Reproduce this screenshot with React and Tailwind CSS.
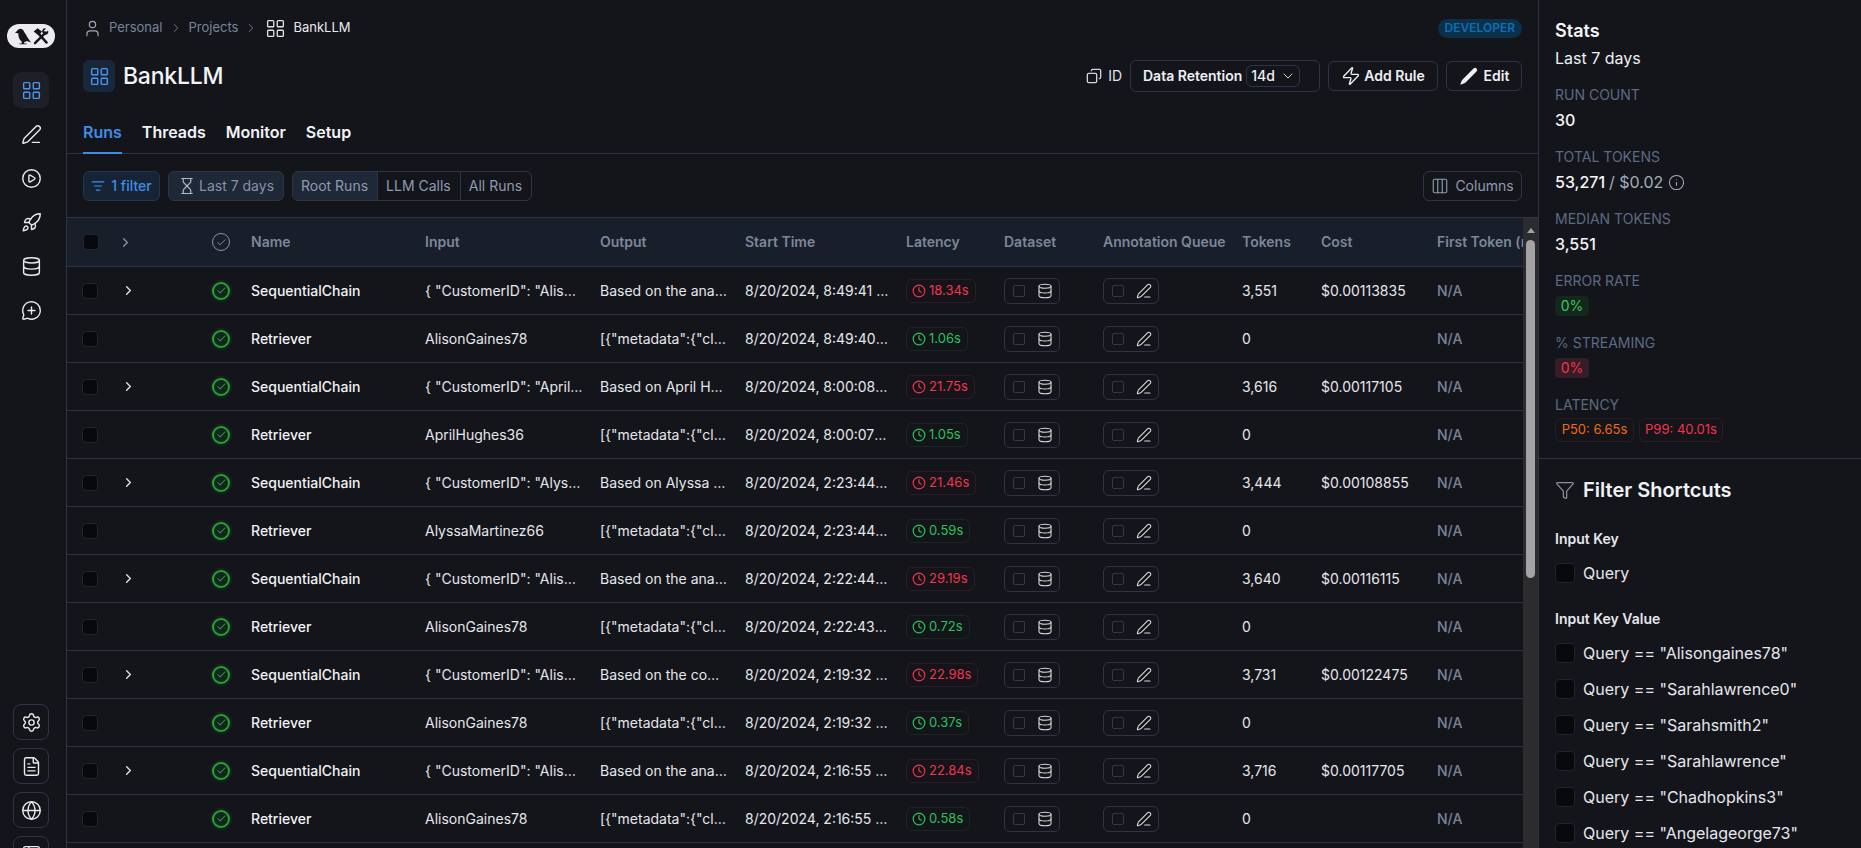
import React from "react";
import {
  LayoutGrid, PenLine, CirclePlay, Rocket, Database, MessageCirclePlus, Settings, FileText, Globe,
  User, ChevronRight, ChevronDown, Copy, Zap, Columns3, Hourglass, ListFilter, Clock, Info, Filter, Check, Table2,
} from "lucide-react";
import { HiMiniPencil } from "react-icons/hi2";

const GRID = "grid grid-cols-[50px_90px_44px_174px_175px_145px_161px_98px_99px_139px_79px_116px_120px] items-center";

const rows = [
  ["SequentialChain", '{ "CustomerID": "AlisonGaines78" }', "Based on the analysis of the data", "8/20/2024, 8:49:41 AM", "18.34s", "3,551", "$0.00113835"],
  ["Retriever", "AlisonGaines78", '[{"metadata":{"cluster":"a"}}]', "8/20/2024, 8:49:40 AM", "1.06s", "0", ""],
  ["SequentialChain", '{ "CustomerID": "AprilHughes36" }', "Based on April Hughes's data set", "8/20/2024, 8:00:08 AM", "21.75s", "3,616", "$0.00117105"],
  ["Retriever", "AprilHughes36", '[{"metadata":{"cluster":"a"}}]', "8/20/2024, 8:00:07 AM", "1.05s", "0", ""],
  ["SequentialChain", '{ "CustomerID": "AlyssaMartinez66" }', "Based on Alyssa Martinez's data", "8/20/2024, 2:23:44 AM", "21.46s", "3,444", "$0.00108855"],
  ["Retriever", "AlyssaMartinez66", '[{"metadata":{"cluster":"a"}}]', "8/20/2024, 2:23:44 AM", "0.59s", "0", ""],
  ["SequentialChain", '{ "CustomerID": "AlisonGaines78" }', "Based on the analysis of the data", "8/20/2024, 2:22:44 AM", "29.19s", "3,640", "$0.00116115"],
  ["Retriever", "AlisonGaines78", '[{"metadata":{"cluster":"a"}}]', "8/20/2024, 2:22:43 AM", "0.72s", "0", ""],
  ["SequentialChain", '{ "CustomerID": "AlisonGaines78" }', "Based on the context provided here", "8/20/2024, 2:19:32 AM", "22.98s", "3,731", "$0.00122475"],
  ["Retriever", "AlisonGaines78", '[{"metadata":{"cluster":"a"}}]', "8/20/2024, 2:19:32 AM", "0.37s", "0", ""],
  ["SequentialChain", '{ "CustomerID": "AlisonGaines78" }', "Based on the analysis of the data", "8/20/2024, 2:16:55 AM", "22.84s", "3,716", "$0.00117705"],
  ["Retriever", "AlisonGaines78", '[{"metadata":{"cluster":"a"}}]', "8/20/2024, 2:16:55 AM", "0.58s", "0", ""],
  ["SequentialChain", '{ "CustomerID": "AlisonGaines78" }', "Based on the analysis of the data", "8/20/2024, 2:15:01 AM", "20.11s", "3,700", "$0.00117000"],
];

function Logo() {
  return (
    <div className="w-[48px] h-[24px] rounded-full bg-[#ececf0] shrink-0">
      <svg width="48" height="24" viewBox="0 0 48 24" fill="#14151b">
        {/* bird */}
        <path d="M8 9 L10.4 6.6 C11.6 4.4 14.2 4 15.6 5.6 C17.6 8.2 20.4 13.6 24 18.6 L20 17 C19 17.6 18 18 17 18 L17.3 19.4 L19.6 19.4 L19.6 20.2 L12.4 20.2 L12.4 19.4 L14.8 19.4 L14.6 17.6 C12.4 15.8 11.2 12.6 11.4 9.4 C10.4 9 9 9 8 9 Z" />
        {/* hammer & wrench */}
        <g stroke="#14151b" fill="none" strokeLinecap="round">
          <path d="M28 19.2 L38.6 8.6" strokeWidth="2.4" />
          <path d="M31.4 9.4 L39.6 18.6" strokeWidth="2.4" />
        </g>
        <path d="M26.6 7.6 L30.6 4.2 L35 7.4 L31.8 11.4 Z" />
        <path d="M41 6.4 L38.8 8.6 L36.8 6.8 L39 4.4 C36.8 3.6 34.6 5.6 35.2 8.2 L38 10.8 C40.2 11.2 42 8.8 41 6.4 Z" />
      </svg>
    </div>
  );
}

function NavIcon({ icon: I, active, boxed }) {
  return (
    <div
      className={
        "w-[36px] h-[36px] rounded-lg flex items-center justify-center shrink-0 " +
        (active ? "bg-[#1f2027] text-[#4a96ee] " : "text-[#e8eaee] ") +
        (boxed ? "border border-[#2a3648]" : "")
      }
    >
      <I size={21} strokeWidth={1.6} />
    </div>
  );
}

function Sidebar() {
  return (
    <aside className="w-[67px] shrink-0 h-full border-r border-[#2a3648] flex flex-col items-center pt-[24px] pr-[4px] overflow-hidden">
      <Logo />
      <div className="flex flex-col gap-[8px] mt-[24px] shrink-0">
        <NavIcon icon={LayoutGrid} active />
        <NavIcon icon={PenLine} />
        <NavIcon icon={CirclePlay} />
        <NavIcon icon={Rocket} />
        <NavIcon icon={Database} />
        <NavIcon icon={MessageCirclePlus} />
      </div>
      <div className="flex flex-col gap-[8px] mt-[376px] shrink-0">
        <NavIcon icon={Settings} boxed />
        <NavIcon icon={FileText} boxed />
        <NavIcon icon={Globe} boxed />
        <NavIcon icon={Table2} boxed />
      </div>
    </aside>
  );
}

function Header() {
  return (
    <div className="px-[16px] relative h-[111px] shrink-0">
      <div className="flex items-center h-[20px] mt-[18px] text-[13px]">
        <User size={19} strokeWidth={1.5} className="text-[#a0a7b4]" />
        <span className="ml-[7px] text-[#79839a]">Personal</span>
        <ChevronRight size={14} className="text-[#79839a] mx-[6px]" strokeWidth={1.5} />
        <span className="text-[#79839a]">Projects</span>
        <ChevronRight size={14} className="text-[#79839a] mx-[6px]" strokeWidth={1.5} />
        <LayoutGrid size={21} strokeWidth={1.5} className="text-[#dfe3e8] ml-[1px]" />
        <span className="ml-[7px] text-[#e8eaee]">BankLLM</span>
        <span className="ml-auto h-[19px] px-[7px] flex items-center rounded-full bg-[#0b3048] text-[#0a70bc] text-xs font-semibold uppercase">Developer</span>
      </div>
      <div className="flex items-center mt-[22px] h-[32px]">
        <div className="w-[32px] h-[32px] rounded-md bg-[#18273a] flex items-center justify-center text-[#4a96ee]">
          <LayoutGrid size={21} strokeWidth={1.6} />
        </div>
        <span className="ml-[8px] text-[23px] font-medium tracking-[-0.01em] text-[#f2f4f7]">BankLLM</span>
        <div className="ml-auto flex items-center text-sm">
          <Copy size={16} strokeWidth={2} className="text-[#cfd3da] -scale-x-100" />
          <span className="ml-[6px] text-[#dfe3e8]">ID</span>
          <div className="ml-[8px] w-[190px] h-[32px] rounded-md border border-[#2a3648] flex items-center pl-[12px] font-semibold text-[#eef0f4]">
            Data Retention
            <span className="ml-[4px] w-[54px] h-[22px] rounded-md border border-[#2a3648] flex items-center pl-[4px] font-medium">
              14d
              <ChevronDown size={16} strokeWidth={1.5} className="ml-[5px] text-[#cfd3da]" />
            </span>
          </div>
          <div className="ml-[8px] w-[110px] h-[30px] rounded-md border border-[#2a3648] flex items-center justify-center gap-[3px] font-semibold text-[#eef0f4]">
            <Zap size={20} strokeWidth={1.6} /> Add Rule
          </div>
          <div className="ml-[8px] w-[76px] h-[30px] rounded-md border border-[#2a3648] flex items-center justify-center gap-[5px] font-semibold text-[#eef0f4]">
            <HiMiniPencil size={20} /> Edit
          </div>
        </div>
      </div>
    </div>
  );
}

function Tabs() {
  return (
    <div className="h-[43px] shrink-0 border-b border-[#2a3648] px-[16px] flex gap-[20px] text-base font-semibold text-[#f2f4f7]">
      <div className="relative text-[#3f8de8] pt-[9px]">
        Runs
        <span className="absolute left-0 right-0 -bottom-px h-[2px] bg-[#3f8de8]" />
      </div>
      <div className="pt-[9px]">Threads</div>
      <div className="pt-[9px]">Monitor</div>
      <div className="pt-[9px]">Setup</div>
    </div>
  );
}

function Toolbar() {
  return (
    <div className="h-[63px] shrink-0 px-[16px] flex items-center text-sm">
      <div className="h-[30px] w-[77px] rounded-md border border-[#21364f] bg-[#172435] text-[#3f8de8] flex items-center justify-center gap-[6px] font-medium">
        <ListFilter size={14} strokeWidth={2} /> 1 filter
      </div>
      <div className="ml-[8px] h-[30px] w-[116px] rounded-md border border-[#2a3648] bg-[#1e2836] text-[#8793a8] flex items-center justify-center gap-[3px]">
        <Hourglass size={18} strokeWidth={1.6} className="text-[#b2b8c4]" /> Last 7 days
      </div>
      <div className="ml-[8px] h-[30px] rounded-md border border-[#2a3648] flex items-center text-[#8f9bb0] overflow-hidden">
        <span className="h-full px-[8px] pr-[9px] flex items-center bg-[#1e2836] border-r border-[#2a3648]">Root Runs</span>
        <span className="h-full pl-[8px] pr-[9px] flex items-center border-r border-[#2a3648]">LLM Calls</span>
        <span className="h-full px-[8px] pr-[9px] flex items-center">All Runs</span>
      </div>
      <div className="ml-auto h-[30px] w-[99px] rounded-md border border-[#2a3648] text-[#8f9bb0] flex items-center justify-center gap-[6px]">
        <Columns3 size={18} strokeWidth={1.5} className="text-[#8f9bb0]" /> Columns
      </div>
    </div>
  );
}

function Cb() {
  return <span className="block w-[16px] h-[16px] rounded-[4px] bg-[#08090d] border border-[#1f2530]" />;
}

function StatusIcon() {
  return (
    <span className="w-[22px] h-[22px] rounded-full bg-[#16241d] flex items-center justify-center">
      <span className="w-[18px] h-[18px] rounded-full border-2 border-[#22a33a] flex items-center justify-center text-[#22a33a]">
        <Check size={11} strokeWidth={2.2} />
      </span>
    </span>
  );
}

function Latency({ v }) {
  const bad = parseFloat(v) > 10;
  return (
    <span
      className={
        "inline-flex items-center gap-[3px] h-[24px] pl-[5px] pr-[6px] rounded-md border text-[13px] " +
        (bad ? "border-[#331a24] text-[#f5334a]" : "border-[#16281f] text-[#28c25b]")
      }
    >
      <Clock size={14} strokeWidth={2} /> {v}
    </span>
  );
}

function MiniBtn({ icon: I }) {
  return (
    <span className="w-[56px] h-[26px] rounded-md border border-[#2a3648] flex items-center pl-[8px] gap-[12px] text-[#d8dbe0]">
      <span className="w-[12px] h-[12px] border border-[#2f3b4d] rounded-[2px]" />
      <I size={16} strokeWidth={1.6} />
    </span>
  );
}

function Table() {
  return (
    <div className="flex-1 min-h-0 relative overflow-hidden border-t border-[#2a3648]">
      <div className="absolute right-0 top-0 bottom-0 w-[15px] bg-[#2c2c2e] flex flex-col items-center z-10">
        <span className="mt-[10px] w-0 h-0 border-x-[4px] border-x-transparent border-b-[5px] border-b-[#a3a3a3]" />
        <span className="mt-[7px] w-[9px] h-[338px] bg-[#a3a3a3] rounded-full shrink-0" />
      </div>
      <div className={GRID + " h-[48px] bg-[#191e2b] border-b border-[#2a3648] text-sm font-semibold text-[#7c8799] whitespace-nowrap box-content"}>
        <div className="pl-[16px]"><Cb /></div>
        <div className="pl-[1px]"><ChevronRight size={15} strokeWidth={2} className="text-[#8a93a3]" /></div>
        <div className="pl-[5px]"><span className="w-[18px] h-[18px] rounded-full border-[1.5px] border-[#8a93a3] flex items-center justify-center text-[#8a93a3]"><Check size={11} strokeWidth={2} /></span></div>
        <div>Name</div>
        <div>Input</div>
        <div>Output</div>
        <div>Start Time</div>
        <div>Latency</div>
        <div>Dataset</div>
        <div>Annotation Queue</div>
        <div>Tokens</div>
        <div>Cost</div>
        <div>First Token (ms)</div>
      </div>
      {rows.map((r, i) => (
        <div key={i} className={GRID + " h-[47px] box-content border-b border-[#2a3648] text-sm text-[#e4e7ec]"}>
          <div className="pl-[15px]"><Cb /></div>
          <div className="pl-[4px]">{r[0] === "SequentialChain" && <ChevronRight size={15} strokeWidth={2.2} className="text-[#dfe3e8]" />}</div>
          <div className="pl-[3px]"><StatusIcon /></div>
          <div className="font-medium text-[#f0f2f5]">{r[0]}</div>
          <div className="truncate pr-[16px]">{r[1]}</div>
          <div className="truncate pr-[18px]">{r[2]}</div>
          <div className="truncate pr-[16px]">{r[3]}</div>
          <div><Latency v={r[4]} /></div>
          <div><MiniBtn icon={Database} /></div>
          <div><MiniBtn icon={PenLine} /></div>
          <div>{r[5]}</div>
          <div>{r[6]}</div>
          <div className="text-[#79839a] font-medium">N/A</div>
        </div>
      ))}
    </div>
  );
}

function Stat({ label, children }) {
  return (
    <div className="h-[62px]">
      <div className="text-sm leading-[20px] text-[#5d6a82] uppercase">{label}</div>
      <div className="mt-[5px]">{children}</div>
    </div>
  );
}

function Shortcut({ children }) {
  return (
    <div className="flex items-center h-[36px] gap-[8px] text-base text-[#e4e7ec] whitespace-nowrap">
      <span className="w-[20px] h-[20px] rounded-[4px] bg-[#08090d] border border-[#1f2530] shrink-0" />
      {children}
    </div>
  );
}

function RightPanel() {
  return (
    <aside className="w-[323px] shrink-0 h-full border-l border-[#2a3648] overflow-hidden">
      <div className="h-[459px] pt-[19px] px-[16px] border-b border-[#2a3648]">
        <div className="text-lg leading-[24px] font-semibold text-[#f4f5f7]">Stats</div>
        <div className="text-base leading-[24px] mt-[3px] text-[#eef0f4]">Last 7 days</div>
        <div className="mt-[15px]">
          <Stat label="Run Count"><div className="text-base leading-[20px] font-medium text-[#f4f5f7]">30</div></Stat>
          <Stat label="Total Tokens">
            <div className="text-base leading-[20px] font-medium text-[#f4f5f7] flex items-center">
              53,271<span className="text-[#a3adbd] font-normal ml-[4px]">/ $0.02</span>
              <Info size={17} strokeWidth={1.5} className="ml-[5px] text-[#a3adbd]" />
            </div>
          </Stat>
          <Stat label="Median Tokens"><div className="text-base leading-[20px] font-medium text-[#f4f5f7]">3,551</div></Stat>
          <Stat label="Error Rate"><span className="mt-[4px] h-[20px] w-[34px] rounded-[4px] bg-[#15261c] text-[#35cc5f] text-sm flex items-center justify-center">0%</span></Stat>
          <Stat label="% Streaming"><span className="mt-[4px] h-[20px] w-[34px] rounded-[4px] bg-[#351c26] text-[#f5334a] text-sm flex items-center justify-center">0%</span></Stat>
          <div>
            <div className="text-sm leading-[20px] text-[#5d6a82] uppercase">Latency</div>
            <div className="flex gap-[5px] mt-[3px] text-[13px]">
              <span className="h-[24px] w-[79px] rounded-md border border-[#2a1d20] text-[#f26a12] flex items-center justify-center">P50: 6.65s</span>
              <span className="h-[24px] w-[84px] rounded-md border border-[#2e1a22] text-[#f5334a] flex items-center justify-center">P99: 40.01s</span>
            </div>
          </div>
        </div>
      </div>
      <div className="px-[16px]">
        <div className="flex items-center gap-[8px] mt-[19px] h-[24px]">
          <Filter size={20} strokeWidth={1.5} className="text-[#8a8f98]" />
          <span className="text-[20px] font-semibold text-[#f0f2f5]">Filter Shortcuts</span>
        </div>
        <div className="text-sm font-semibold text-[#e4e7ec] mt-[27px] leading-[20px]">Input Key</div>
        <div className="mt-[6px]"><Shortcut>Query</Shortcut></div>
        <div className="text-sm font-semibold text-[#e4e7ec] mt-[18px] leading-[20px]">Input Key Value</div>
        <div className="mt-[6px]">
          <Shortcut>Query == "Alisongaines78"</Shortcut>
          <Shortcut>Query == "Sarahlawrence0"</Shortcut>
          <Shortcut>Query == "Sarahsmith2"</Shortcut>
          <Shortcut>Query == "Sarahlawrence"</Shortcut>
          <Shortcut>Query == "Chadhopkins3"</Shortcut>
          <Shortcut>Query == "Angelageorge73"</Shortcut>
          <Shortcut>Query == "Johnsmith12"</Shortcut>
        </div>
      </div>
    </aside>
  );
}

export default function App() {
  return (
    <div className="h-screen w-full overflow-hidden flex bg-[#14151b] font-['Inter',sans-serif]">
      <Sidebar />
      <main className="flex-1 min-w-0 h-full flex flex-col">
        <Header />
        <Tabs />
        <Toolbar />
        <Table />
      </main>
      <RightPanel />
    </div>
  );
}
